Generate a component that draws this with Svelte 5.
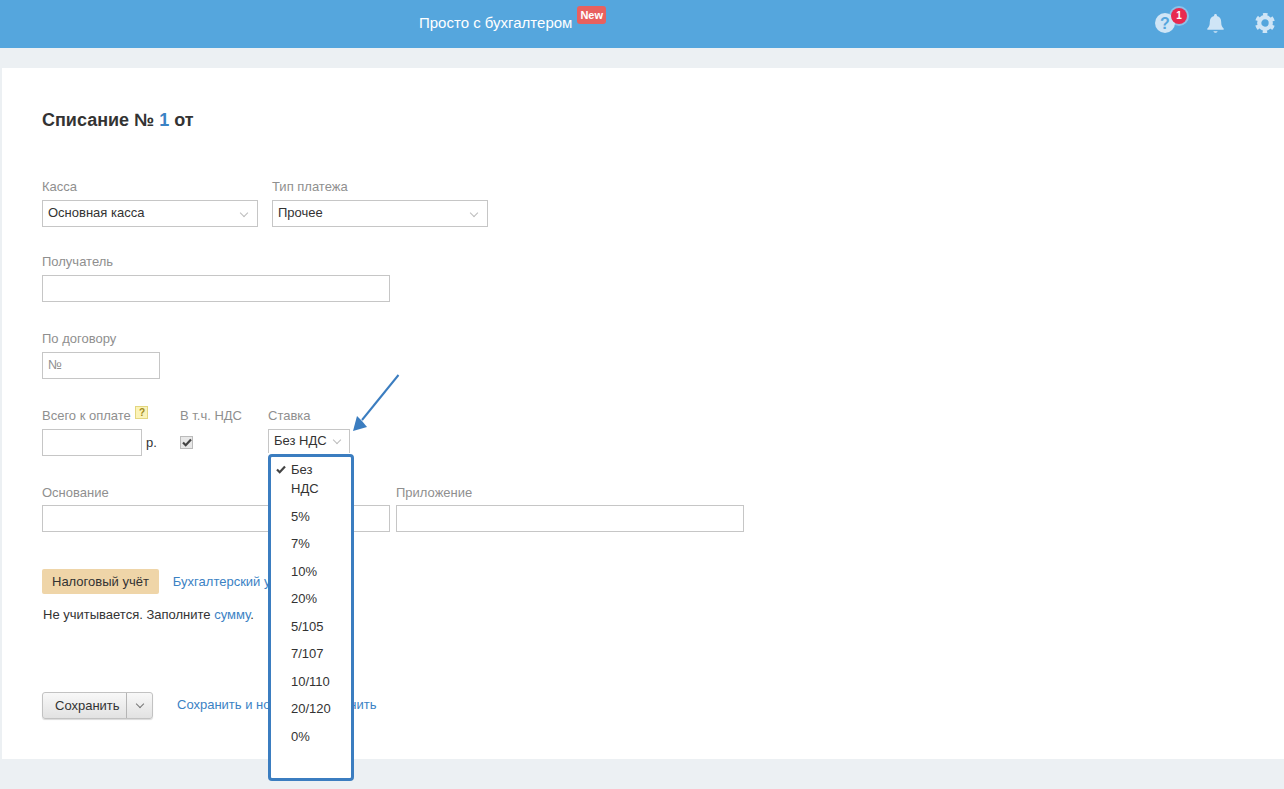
<script>
  const options = ['5%', '7%', '10%', '20%', '5/105', '7/107', '10/110', '20/120', '0%'];
</script>

<div class="page">
  <header class="topbar">
    <div class="brand">
      <span>Просто с бухгалтером</span>
      <span class="new">New</span>
    </div>
    <div class="tools">
      <div class="help">
        <svg width="20" height="20" viewBox="0 0 20 20"><circle cx="10" cy="10" r="10" fill="#cfe5f6"/><text x="10" y="15.800" text-anchor="middle" class="q">?</text></svg>
        <span class="count">1</span>
      </div>
      <svg class="bell" width="19" height="21" viewBox="0 0 20 22"><path d="M10 1c.9 0 1.500.6 1.500 1.500v.6c2.900.7 4.500 3.100 4.500 6.200 0 3.400.7 5.100 2.600 6.900v1.300H1.400v-1.300C3.300 14.400 4 12.700 4 9.300c0-3.100 1.600-5.500 4.500-6.200v-.6C8.500 1.600 9.100 1 10 1z" fill="#cfe5f6"/><path d="M7.800 19.200h4.400c-.3 1-1.100 1.600-2.200 1.600s-1.900-.6-2.200-1.600z" fill="#cfe5f6"/></svg>
      <svg class="gear" width="20" height="20" viewBox="0 0 20 20">
        <circle cx="10" cy="10" r="5.800" fill="none" stroke="#cfe5f6" stroke-width="4.200"/>
        <circle cx="10" cy="10" r="8.500" fill="none" stroke="#cfe5f6" stroke-width="3" stroke-dasharray="4.300 4.600" transform="rotate(15.500 10 10)"/>
      </svg>
    </div>
  </header>

  <main class="card">
    <h1>Списание № <span class="num">1</span> от</h1>

    <div class="row first">
      <div class="field">
        <span class="label">Касса</span>
        <div class="select w216"><span>Основная касса</span><i class="chev"></i></div>
      </div>
      <div class="field">
        <span class="label">Тип платежа</span>
        <div class="select w216"><span>Прочее</span><i class="chev"></i></div>
      </div>
    </div>

    <div class="field block recipient">
      <span class="label">Получатель</span>
      <div class="input w348"></div>
    </div>

    <div class="field block contract">
      <span class="label">По договору</span>
      <div class="input w118 ph">№</div>
    </div>

    <div class="row sums">
      <div class="field total">
        <span class="label">Всего к оплате <b class="hint">?</b></span>
        <div class="amount"><div class="input w100"></div><span class="rub">р.</span></div>
      </div>
      <div class="field vat">
        <span class="label">В т.ч. НДС</span>
        <span class="checkbox">
          <svg width="10" height="9" viewBox="0 0 10 9"><path d="M1 4.500l2.700 2.700L9 1.500" fill="none" stroke="#444" stroke-width="2.200"/></svg>
        </span>
      </div>
      <div class="field rate">
        <span class="label">Ставка</span>
        <div class="select mini"><span>Без НДС</span><i class="chev"></i></div>
        <ul class="menu">
          <li class="checked">
            <svg width="10" height="9" viewBox="0 0 10 9"><path d="M1 4.500l2.700 2.700L9 1.500" fill="none" stroke="#444" stroke-width="2.200"/></svg>
            Без НДС
          </li>
          {#each options as option}
            <li>{option}</li>
          {/each}
        </ul>
      </div>
    </div>

    <div class="row basis">
      <div class="field">
        <span class="label">Основание</span>
        <div class="input w348"></div>
      </div>
      <div class="field">
        <span class="label">Приложение</span>
        <div class="input w348"></div>
      </div>
    </div>

    <div class="tabs">
      <span class="tab">Налоговый учёт</span>
      <a class="link" href="#tab">Бухгалтерский учёт</a>
    </div>
    <p class="note">Не учитывается. Заполните <a class="link" href="#sum">сумму</a>.</p>

    <div class="actions">
      <div class="save">
        <span class="save-main">Сохранить</span>
        <span class="save-more"><i class="chev dark"></i></span>
      </div>
      <a class="link" href="#new">Сохранить и новый</a>
      <a class="link" href="#cancel">Отменить</a>
    </div>
  </main>

  <svg class="arrow" width="60" height="70" viewBox="0 0 60 70">
    <path d="M55.500 2L19 47" stroke="#3b7dc0" stroke-width="2" fill="none"/>
    <path d="M10 58l4-15 5 5 5 6z" fill="#3b7dc0"/>
  </svg>
</div>

<style>
  :global(body) {
    margin: 0;
    background: #ecf0f3;
    font-family: "Liberation Sans", Arial, sans-serif;
    font-size: 13px;
    color: #333;
  }
  .page {
    position: relative;
    height: 789px;
    overflow: hidden;
  }
  .topbar {
    height: 48px;
    background: #55a6dd;
    display: flex;
    align-items: center;
    position: relative;
  }
  .brand {
    margin-left: 419px;
    color: #fff;
    font-size: 15px;
    display: flex;
    align-items: flex-start;
    padding-bottom: 3px;
  }
  .new {
    background: #e8615f;
    color: #fff;
    font-size: 11px;
    font-weight: 700;
    line-height: 18px;
    height: 18px;
    padding: 0 3px;
    border-radius: 3px;
    margin: -8px 0 0 5px;
  }
  .tools {
    margin-left: auto;
    display: flex;
    align-items: center;
    padding-right: 9px;
  }
  .help {
    position: relative;
    width: 20px;
    height: 20px;
    margin-top: -2px;
  }
  .help svg { display: block; }
  .q {
    font: bold 16px "Liberation Sans", sans-serif;
    fill: #55a6dd;
  }
  .count {
    position: absolute;
    left: 16px;
    top: -5px;
    width: 16px;
    height: 16px;
    border-radius: 50%;
    background: #e8294f;
    box-shadow: 0 0 0 2px rgba(207, 229, 246, 0.45);
    color: #fff;
    font-size: 10px;
    font-weight: 700;
    line-height: 16px;
    text-align: center;
  }
  .bell { margin-left: 31px; margin-top: -2px; }
  .gear { margin-left: 30px; margin-top: -2px; }
  .card {
    background: #fff;
    margin: 20px 0 0 2px;
    height: 691px;
    padding: 41px 0 0 40px;
    box-sizing: border-box;
  }
  h1 {
    margin: 0;
    font-size: 18px;
    line-height: 22px;
    font-weight: 700;
    color: #333;
  }
  .num { color: #3b82c4; }
  .row { display: flex; }
  .first { margin-top: 48px; gap: 14px; }
  .field { display: flex; flex-direction: column; }
  .label {
    color: #8f8f8f;
    line-height: 15px;
    margin-bottom: 6px;
    white-space: nowrap;
  }
  .block { align-items: flex-start; }
  .recipient { margin-top: 27px; }
  .contract { margin-top: 29px; }
  .select, .input {
    border: 1px solid #c6c6c6;
    box-sizing: border-box;
    height: 27px;
    background: #fff;
    line-height: 23px;
    padding: 0 5px;
    color: #333;
    position: relative;
  }
  .w216 { width: 216px; }
  .w348 { width: 348px; }
  .w118 { width: 118px; }
  .w100 { width: 100px; }
  .ph { color: #8f8f8f; }
  .chev {
    position: absolute;
    right: 10px;
    top: 9px;
    width: 5px;
    height: 5px;
    border-right: 1px solid #bcbcbc;
    border-bottom: 1px solid #bcbcbc;
    transform: rotate(45deg);
  }
  .chev.dark {
    border-color: #777;
    right: 9px;
    top: 8px;
  }
  .sums { margin-top: 29px; height: 48px; }
  .total { width: 138px; }
  .hint {
    display: inline-block;
    box-sizing: border-box;
    width: 13px;
    height: 13px;
    border: 1px solid #e3d67f;
    background: #fbf3b8;
    color: #a08a20;
    font-size: 10px;
    line-height: 11px;
    text-align: center;
    position: relative;
    top: -4px;
    margin-left: 1px;
  }
  .amount {
    display: flex;
    align-items: center;
  }
  .rub { margin: 0 0 0 4px; }
  .vat { width: 88px; }
  .checkbox {
    width: 11px;
    height: 11px;
    border: 1px solid #bbb;
    background: #e8e8e8;
    display: flex;
    align-items: center;
    justify-content: center;
    margin-top: 7px;
  }
  .rate { position: relative; }
  .mini {
    width: 82px;
    height: 24px;
    line-height: 21px;
    border-bottom: 0;
  }
  .mini .chev { right: 9px; top: 7px; }
  .menu {
    position: absolute;
    z-index: 2;
    left: 0;
    top: 46px;
    width: 86px;
    height: 327px;
    box-sizing: border-box;
    margin: 0;
    padding: 3px 0 0;
    list-style: none;
    background: #fff;
    border: 3px solid #3b7dc0;
    border-radius: 4px;
  }
  .menu li {
    padding: 0 20px;
    line-height: 19px;
    margin-bottom: 8.500px;
    color: #333;
    position: relative;
  }
  .menu li svg {
    position: absolute;
    left: 5px;
    top: 5px;
  }
  .basis { margin-top: 29px; gap: 6px; }
  .basis .label { margin-bottom: 5px; }
  .tabs {
    margin-top: 37px;
    display: flex;
    align-items: center;
    gap: 14px;
  }
  .tab {
    background: #efd5a8;
    border-radius: 2px;
    height: 25px;
    line-height: 25px;
    padding: 0 10px;
  }
  .link { color: #3b82c4; text-decoration: none; }
  .note {
    margin: 13px 0 0 1px;
    line-height: 16px;
  }
  .actions {
    margin-top: 69px;
    display: flex;
    align-items: center;
  }
  .save {
    display: flex;
    height: 27px;
    width: 111px;
    line-height: 25px;
    box-sizing: border-box;
    border: 1px solid #c2c2c2;
    border-radius: 3px;
    background: linear-gradient(#f8f8f8, #e2e2e2);
    box-shadow: 0 1px 1px rgba(0, 0, 0, 0.15);
  }
  .save-main { width: 84px; box-sizing: border-box; padding-left: 12px; border-right: 1px solid #b5b5b5; }
  .save-more { flex: 1; position: relative; }
  .actions .link { padding-bottom: 2px; }
  .actions .link:first-of-type { margin-left: 24px; }
  .actions .link + .link { margin-left: 23px; }
  .arrow {
    position: absolute;
    left: 343px;
    top: 373px;
    z-index: 3;
  }
</style>
